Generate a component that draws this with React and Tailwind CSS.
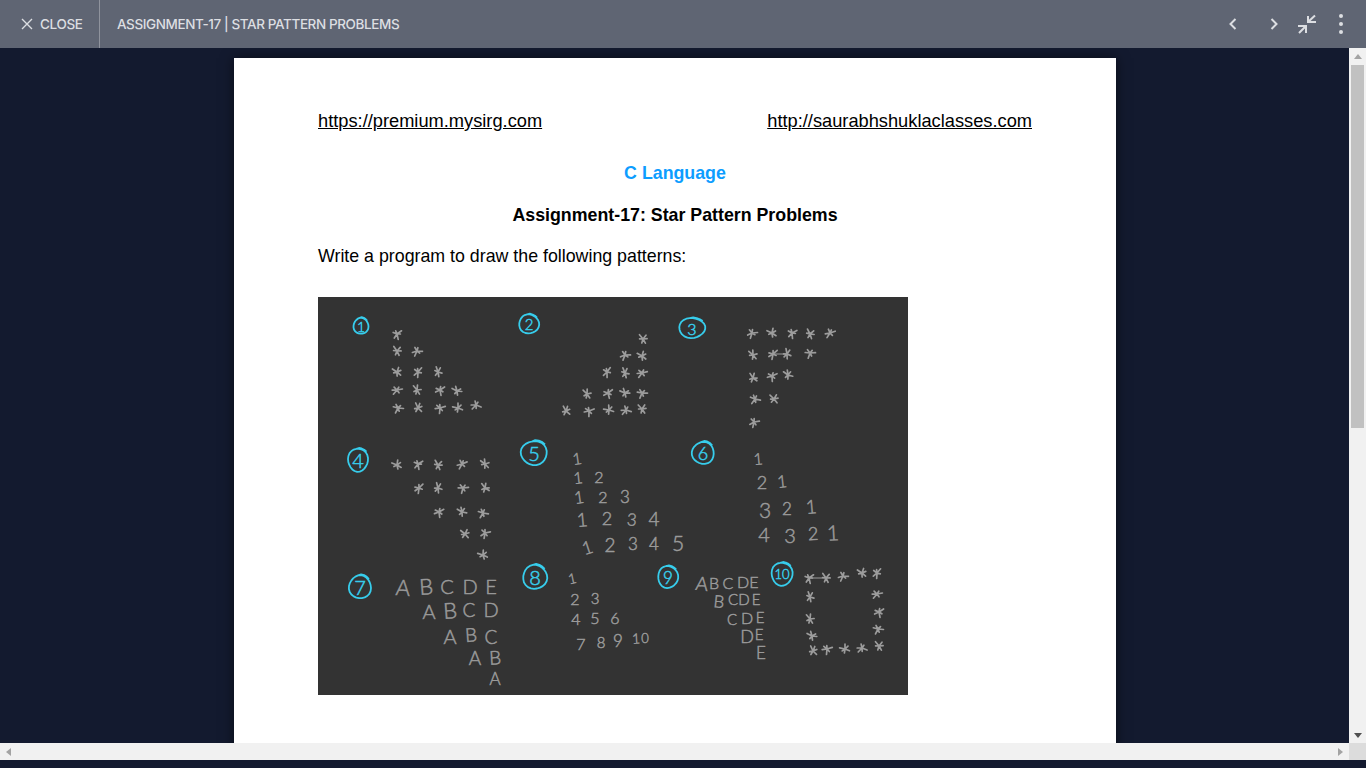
const STARS = [
  [397,334],[397,351],[417,351],[397,372],[418,372],[438,372],[397,390],[417,390],[440,390],[457,391],[398,408],[418,408],[440,408],[458,408],[476,405],
  [643,339],[625,355],[642,356],[607,372],[625,373],[642,373],[587,394],[608,393],[625,393],[642,393],[566,411],[589,411],[609,410],[626,410],[642,409],
  [752,333],[772,333],[792,333],[810,334],[830,333],[753,355],[773,354],[787,354],[810,353],[753,378],[772,376],[788,375],[755,399],[774,399],[754,422],
  [397,465],[418,464],[438,465],[462,464],[485,464],[419,488],[438,488],[463,488],[485,488],[439,512],[462,512],[483,513],[465,534],[485,533],[483,555],
  [809,578],[826,578],[843,576],[862,573],[877,573],[810,597],[877,594],[810,619],[879,612],[812,636],[878,629],[813,651],[827,649],[845,649],[862,648],[879,646],
];

const GLYPHS = [
  ["1",577,458,16,-8],["1",578,477,16,-6],["2",599,476,16,0],["1",579,497,17,-8],["2",603,496,16,0],["3",625,496,17,0],
  ["1",582,519,19,-5],["2",607,518,18,0],["3",632,519,17,4],["4",654,518,19,0],["1",587,547,18,-18],["2",610,544,19,0],["3",633,543,17,0],["4",654,543,17,0],["5",678,542,21,0],
  ["1",758,458,16,-5],["2",762,482,18,0],["1",782,481,17,-6],["3",765,509,21,0],["2",787,508,17,0],["1",811,506,19,-5],["4",764,534,20,0],["3",790,535,20,0],["2",813,533,18,-3],["1",833,532,21,-3],
  ["A",403,587,22,4],["B",426,586,22,-4],["C",447,586,20,0],["D",470,586,20,0],["E",491,586,20,0],
  ["A",429,611,20,0],["B",450,610,22,-4],["C",469,609,19,0],["D",491,609,20,0],
  ["A",450,636,20,0],["B",471,634,19,-4],["C",491,636,19,0],["A",475,657,19,0],["B",495,657,19,-3],["A",495,678,17,0],
  ["1",572,578,14,-12],["2",575,598,16,0],["3",595,598,15,0],["4",576,618,16,0],["5",595,617,16,0],["6",615,617,16,0],["7",581,643,16,0],["8",601,642,15,0],["9",618,640,17,0],["1",636,638,14,-3],["0",645,638,13,0],
  ["A",702,583,19,6],["B",714,582,16,0],["C",728,582,16,0],["D",743,581,16,0],["E",754,581,16,0],
  ["B",719,601,17,6],["C",733,599,15,0],["D",744,599,15,0],["E",756,599,15,0],
  ["C",732,619,15,0],["D",747,617,16,0],["E",760,617,15,0],["D",747,636,18,0],["E",759,634,15,0],["E",761,652,17,0],
];

const RINGS = [
  ["1",361,326,7.5,8,14],["2",529,324,10,9.5,15],["3",692,328,13,10,16],["4",358,460,10,11.5,20],["5",534,453,13,12,20],
  ["6",703,453,11,11,18],["7",360,587,11,11.5,20],["8",535,577,12,12,20],["9",668,577,10,11,17],["10",782,574,10.5,11.5,13],
];

function star(x, y, i) {
  const rot = (i * 47) % 60;
  const segs = [];
  for (let k = 0; k < 6; k++) {
    const a = ((rot + k * 60 + ((i + k) * 17) % 30) * Math.PI) / 180;
    const r = 3.4 + ((i * 2 + k * 3) % 4) * 0.7;
    segs.push(`M${x} ${y}L${(x + Math.cos(a) * r).toFixed(1)} ${(y + Math.sin(a) * r).toFixed(1)}`);
  }
  return segs.join("");
}

function ring(cx, cy, rx, ry, i) {
  const pts = [];
  for (let k = 0; k <= 28; k++) {
    const t = (-100 + (k / 24) * 360) * (Math.PI / 180);
    const w = 1 + Math.sin(t * 3 + i) * 0.03 + (k > 24 ? 0.08 : 0);
    pts.push(`${(cx + Math.cos(t) * rx * w).toFixed(1)} ${(cy + Math.sin(t) * ry * w).toFixed(1)}`);
  }
  return "M" + pts.join("L");
}

function Sketch() {
  return (
    <svg viewBox="318 297 590 398" width="590" height="398" className="block bg-[#333333]">
      <g stroke="#9c9c9c" strokeWidth="1.7" strokeLinecap="round" fill="none">
        {STARS.map(([x, y], i) => (
          <path key={i} d={star(x, y, i)} />
        ))}
        <path d="M773 354H787M809 578H826" strokeWidth="1" />
      </g>
      <g fill="#9a9a9a" stroke="#9a9a9a" strokeWidth="0.5" fontFamily="Lato, sans-serif" fontWeight="300" textAnchor="middle" dominantBaseline="central">
        {GLYPHS.map(([c, x, y, s, r], i) => (
          <text key={i} x={x} y={y} fontSize={s} transform={`rotate(${r} ${x} ${y})`}>{c}</text>
        ))}
      </g>
      <g stroke="#37cdec" strokeWidth="1.8" strokeLinejoin="round" fill="none">
        {RINGS.map(([n, x, y, rx, ry], i) => (
          <path key={n} d={ring(x, y, rx, ry, i)} />
        ))}
      </g>
      <g fill="#37cdec" stroke="#37cdec" strokeWidth="0.5" fontFamily="Lato, sans-serif" fontWeight="300" textAnchor="middle" dominantBaseline="central">
        {RINGS.map(([n, x, y, , , s]) => (
          <text key={n} x={x} y={y} fontSize={s}>{n}</text>
        ))}
      </g>
    </svg>
  );
}

function Arrow({ d, fill }) {
  return (
    <svg width="12" height="12" viewBox="0 0 12 12" className="block">
      <path d={d} fill={fill} />
    </svg>
  );
}

export default function App() {
  return (
    <div className="flex h-screen w-screen flex-col overflow-hidden bg-[#131a2f]">
      <header className="flex h-12 shrink-0 items-center bg-[#5f6573] text-[13.5px] font-medium text-[#dcdee2] [font-family:Inter,sans-serif]">
        <div className="flex h-full w-[100px] items-center gap-[7px] border-r border-[#8f939d] pl-[21px]">
          <svg width="12" height="12" viewBox="0 0 12 12" fill="none" stroke="#dcdee2" strokeWidth="1.4" className="block">
            <path d="M1 1l10 10M11 1L1 11" />
          </svg>
          <span className="tracking-[-0.35px]">CLOSE</span>
        </div>
        <div className="ml-[17px] flex-1 tracking-[-0.4px]">ASSIGNMENT-17 | STAR PATTERN PROBLEMS</div>
        <div className="flex items-center pr-[23px]">
          <svg width="10" height="12" viewBox="0 0 10 12" fill="none" stroke="#dcdee2" strokeWidth="2" className="block">
            <path d="M7.500 1L2.500 6l5 5" />
          </svg>
          <svg width="10" height="12" viewBox="0 0 10 12" fill="none" stroke="#dcdee2" strokeWidth="2" className="ml-[31px] block">
            <path d="M2.500 1l5 5-5 5" />
          </svg>
          <svg width="20" height="20" viewBox="0 0 20 20" fill="none" stroke="#dcdee2" strokeWidth="2" className="ml-[18px] block">
            <path d="M11 2v6h8M11 8l7-6.500M1 12h8v7M9 12l-7 7" />
          </svg>
          <svg width="4" height="20" viewBox="0 0 4 20" fill="#dcdee2" className="ml-[22px] block">
            <circle cx="2" cy="2" r="2" />
            <circle cx="2" cy="10" r="2" />
            <circle cx="2" cy="18" r="2" />
          </svg>
        </div>
      </header>
      <div className="flex min-h-0 flex-1">
        <main className="min-w-0 flex-1 overflow-hidden pt-[10px]">
          <div className="ml-[234px] h-[800px] w-[882px] bg-white px-[84px] pt-[52px] text-black shadow-[0_0_12px_rgba(0,0,0,0.55)] [font-family:'Liberation_Sans',sans-serif]">
            <div className="flex justify-between text-[18.25px] leading-[22px] underline">
              <span>https://premium.mysirg.com</span>
              <span>http://saurabhshuklaclasses.com</span>
            </div>
            <p className="mt-[30px] text-center text-[17.8px] font-bold leading-[22px] text-[#0d9dff]">C Language</p>
            <p className="mt-[20px] text-center text-[17.8px] font-bold leading-[22px]">Assignment-17: Star Pattern Problems</p>
            <p className="mt-[19px] text-[17.8px] leading-[22px]">Write a program to draw the following patterns:</p>
            <div className="mt-[30px]">
              <Sketch />
            </div>
          </div>
        </main>
        <div className="flex w-[17px] shrink-0 flex-col items-center bg-[#f1f1f1]">
          <div className="flex h-[17px] items-center justify-center">
            <Arrow d="M6 3l4 5H2z" fill="#a3a3a3" />
          </div>
          <div className="h-[363px] w-[13px] bg-[#c1c1c1]" />
          <div className="mt-auto flex h-[17px] items-center justify-center">
            <Arrow d="M2 4h8L6 9z" fill="#505050" />
          </div>
        </div>
      </div>
      <div className="flex h-[17px] shrink-0 bg-[#f1f1f1]">
        <div className="flex w-[1349px] items-center justify-between px-[2px]">
          <Arrow d="M4 6l5-4v8z" fill="#a3a3a3" />
          <Arrow d="M8 6L3 2v8z" fill="#a3a3a3" />
        </div>
        <div className="w-[17px] bg-[#dcdcdc]" />
      </div>
      <div className="h-2 shrink-0 bg-[#131a2f]" />
    </div>
  );
}
